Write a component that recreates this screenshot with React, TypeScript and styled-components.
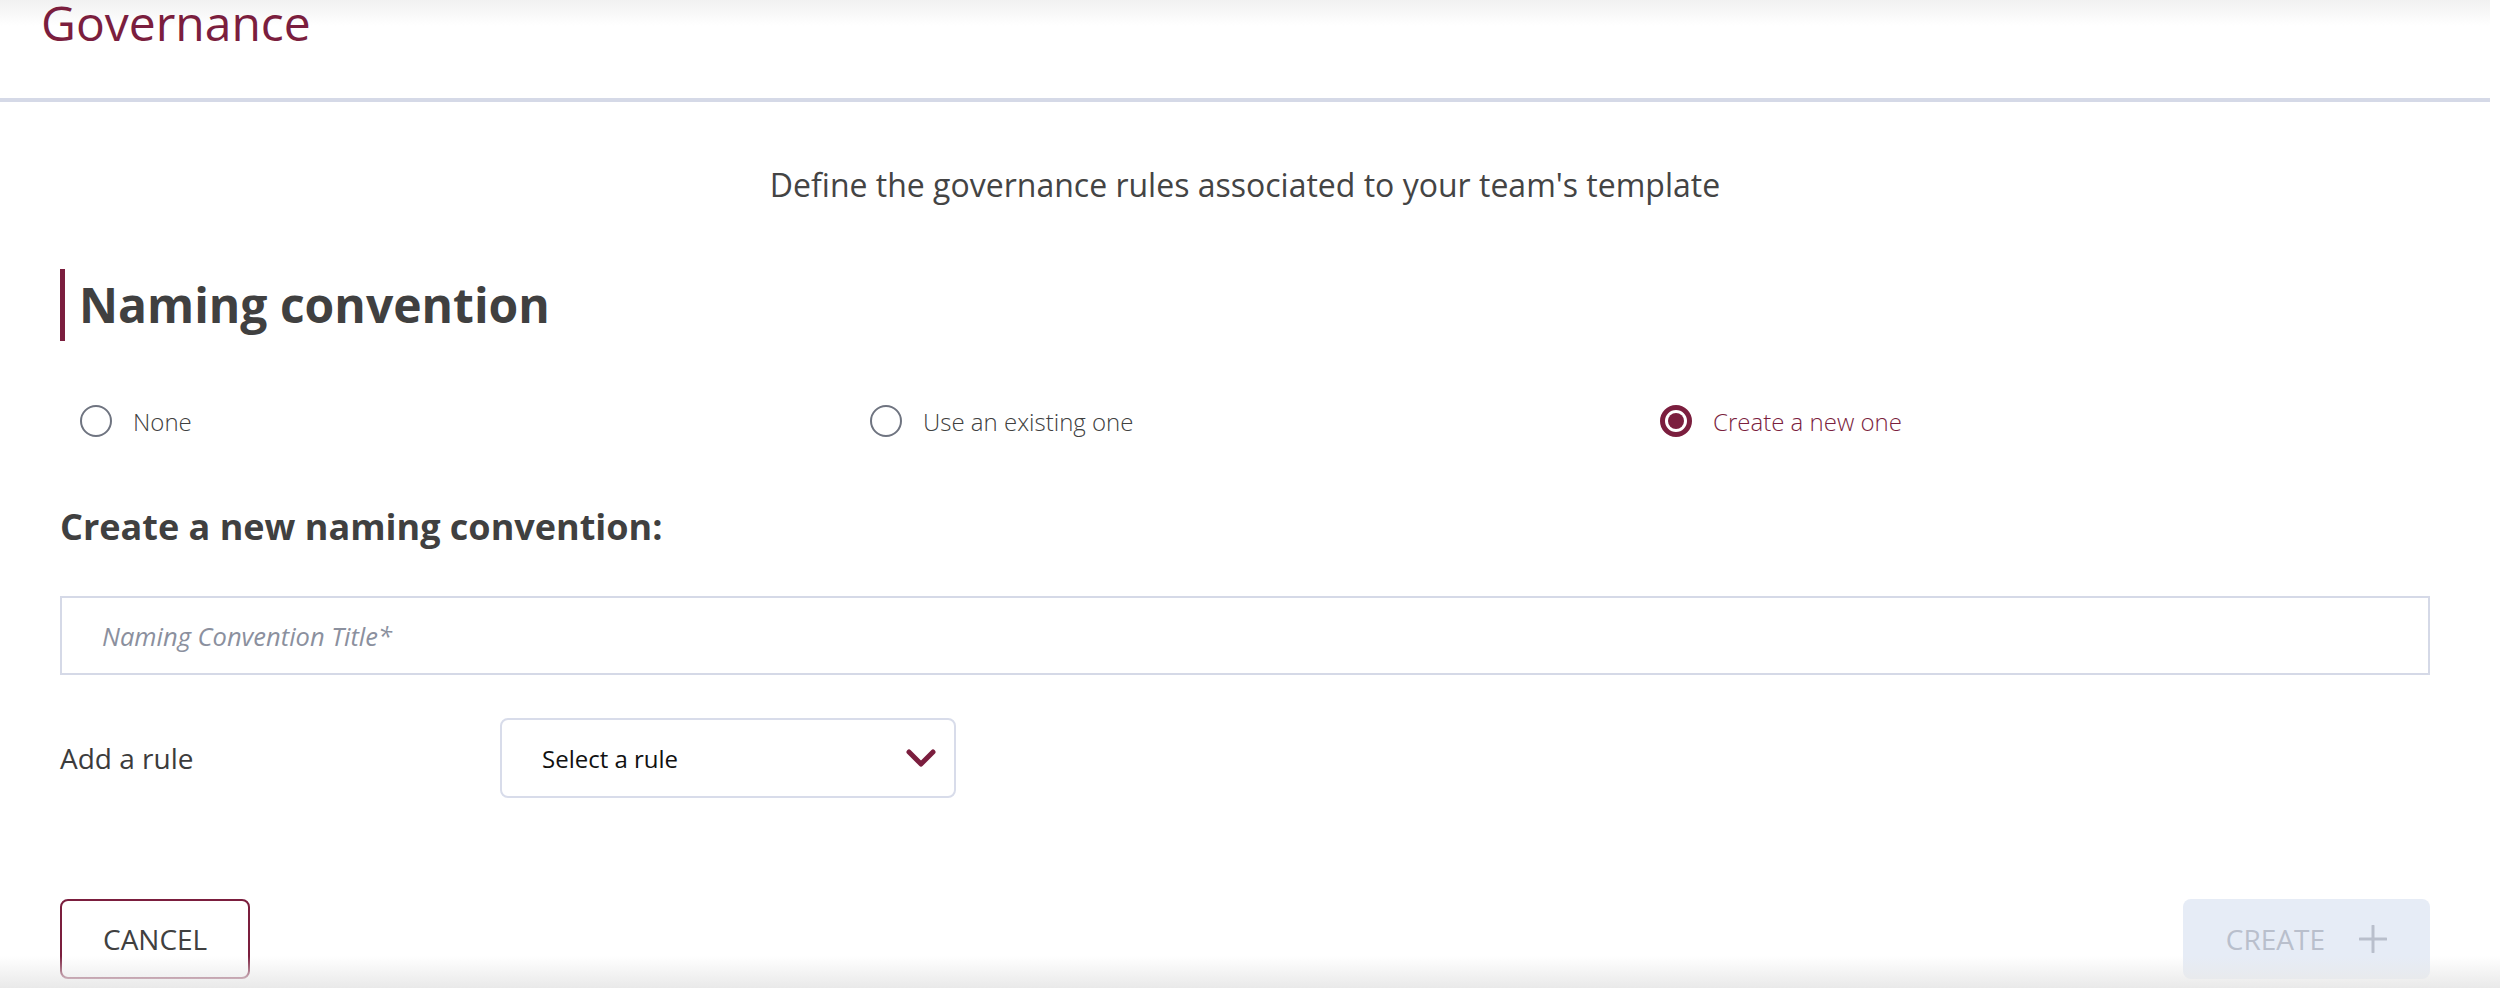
import { useState } from "react";
import styled, { createGlobalStyle } from "styled-components";

const maroon = "#7b1e3e";

const GlobalStyle = createGlobalStyle`
  html, body {
    margin: 0;
    padding: 0;
    background: #fff;
  }
  body {
    font-family: "Open Sans", "Noto Sans", sans-serif;
    color: #404040;
  }
  * {
    box-sizing: border-box;
  }
`;

const Page = styled.div`
  position: relative;
  height: 100vh;
  overflow: hidden;
`;

const Header = styled.header`
  height: 102px;
  margin-right: 10px;
  padding-left: 41px;
  background: linear-gradient(#f1f1f1 0, #fff 26px);
  border-bottom: 4px solid #d5d9e7;
`;

const PageTitle = styled.h1`
  margin: 0;
  font-size: 48px;
  line-height: 46px;
  font-weight: 400;
  color: ${maroon};
`;

const Content = styled.main`
  padding: 0 70px 0 60px;
`;

const Intro = styled.p`
  margin: 62px 0 0;
  text-align: center;
  font-size: 32px;
  line-height: 42px;
  color: #444;
`;

const SectionTitle = styled.h2`
  margin: 63px 0 0;
  padding-left: 14px;
  border-left: 5px solid ${maroon};
  font-size: 48px;
  line-height: 72px;
  font-weight: 700;
  color: #404040;
`;

const RadioGroup = styled.div`
  display: grid;
  grid-template-columns: repeat(3, 1fr);
  margin-top: 64px;
`;

const RadioOption = styled.label<{ $checked: boolean }>`
  display: flex;
  align-items: center;
  gap: 21px;
  padding-left: 20px;
  height: 32px;
  font-size: 24px;
  font-weight: 300;
  color: ${(p) => (p.$checked ? maroon : "#404040")};
  cursor: pointer;
`;

const RadioCircle = styled.span<{ $checked: boolean }>`
  display: flex;
  align-items: center;
  justify-content: center;
  width: 32px;
  height: 32px;
  border-radius: 50%;
  border: ${(p) => (p.$checked ? `5px solid ${maroon}` : "2px solid #6f7480")};
  flex-shrink: 0;
`;

const RadioDot = styled.span`
  width: 16px;
  height: 16px;
  border-radius: 50%;
  background: ${maroon};
`;

const FormTitle = styled.h3`
  margin: 66px 0 0;
  font-size: 36px;
  line-height: 48px;
  font-weight: 700;
  color: #404040;
`;

const TitleInput = styled.input`
  display: block;
  width: 100%;
  height: 79px;
  margin-top: 45px;
  padding: 0 40px;
  border: 2px solid #d5d9e7;
  border-radius: 0;
  outline: none;
  font-family: inherit;
  font-size: 25.5px;
  color: #404040;

  &::placeholder {
    font-style: italic;
    color: #8b909e;
  }
`;

const RuleRow = styled.div`
  display: flex;
  align-items: center;
  margin-top: 43px;
`;

const RuleLabel = styled.span`
  width: 440px;
  font-size: 28px;
  color: #3c3c3c;
`;

const SelectBox = styled.button`
  display: flex;
  align-items: center;
  justify-content: space-between;
  width: 456px;
  height: 80px;
  padding: 0 18px 0 40px;
  background: #fff;
  border: 2px solid #d8dcea;
  border-radius: 8px;
  font-family: inherit;
  font-size: 24px;
  color: #111;
  cursor: pointer;
`;

const Actions = styled.div`
  display: flex;
  justify-content: space-between;
  align-items: center;
  margin-top: 101px;
`;

const CancelButton = styled.button`
  height: 80px;
  padding: 0 41px;
  background: #fff;
  border: 2px solid ${maroon};
  border-radius: 8px;
  font-family: inherit;
  font-size: 28px;
  color: #404040;
  cursor: pointer;
`;

const CreateButton = styled.button`
  display: flex;
  align-items: center;
  gap: 34px;
  height: 80px;
  padding: 0 43px;
  background: #e6ecf6;
  border: none;
  border-radius: 8px;
  font-family: inherit;
  font-size: 28px;
  color: #b9bfcc;
  cursor: not-allowed;
`;

const BottomShade = styled.div`
  position: absolute;
  left: 0;
  right: 0;
  bottom: 0;
  height: 32px;
  background: linear-gradient(rgba(233, 233, 233, 0), #e9e9e9);
  pointer-events: none;
`;

const options = ["None", "Use an existing one", "Create a new one"];

function Chevron() {
  return (
    <svg width="30" height="18" viewBox="0 0 30 18" fill="none">
      <path
        d="M3 3l12 12L27 3"
        stroke={maroon}
        strokeWidth="5"
        strokeLinecap="round"
        strokeLinejoin="round"
      />
    </svg>
  );
}

function Plus() {
  return (
    <svg width="28" height="28" viewBox="0 0 28 28" fill="none">
      <path d="M14 1v26M1 14h26" stroke="#b9bfcc" strokeWidth="3" strokeLinecap="round" />
    </svg>
  );
}

export default function App() {
  const [selected, setSelected] = useState(2);
  return (
    <Page>
      <GlobalStyle />
      <Header>
        <PageTitle>Governance</PageTitle>
      </Header>
      <Content>
        <Intro>Define the governance rules associated to your team's template</Intro>
        <SectionTitle>Naming convention</SectionTitle>
        <RadioGroup>
          {options.map((label, i) => (
            <RadioOption
              key={label}
              $checked={selected === i}
              onClick={() => setSelected(i)}
            >
              <RadioCircle $checked={selected === i}>
                {selected === i && <RadioDot />}
              </RadioCircle>
              {label}
            </RadioOption>
          ))}
        </RadioGroup>
        <FormTitle>Create a new naming convention:</FormTitle>
        <TitleInput placeholder="Naming Convention Title*" />
        <RuleRow>
          <RuleLabel>Add a rule</RuleLabel>
          <SelectBox>
            Select a rule
            <Chevron />
          </SelectBox>
        </RuleRow>
        <Actions>
          <CancelButton>CANCEL</CancelButton>
          <CreateButton disabled>
            CREATE
            <Plus />
          </CreateButton>
        </Actions>
      </Content>
      <BottomShade />
    </Page>
  );
}
